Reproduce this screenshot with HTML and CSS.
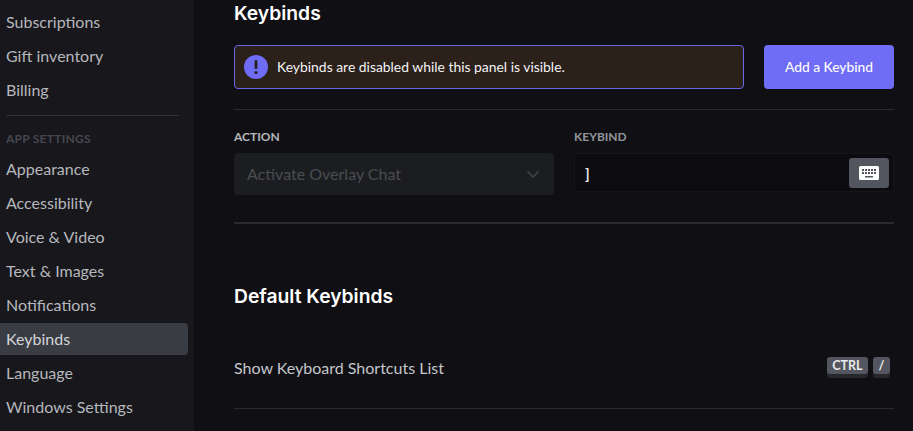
FILE: index.html
```html
<!DOCTYPE html>
<html lang="en">
<head>
  <meta charset="UTF-8">
  <title>Keybinds</title>
  <link rel="stylesheet" href="styles.css">
</head>
<body>
  <div class="app">
    <nav class="sidebar">
      <a class="nav-item">Subscriptions</a>
      <a class="nav-item">Gift inventory</a>
      <a class="nav-item">Billing</a>
      <div class="nav-divider"></div>
      <div class="nav-header">APP SETTINGS</div>
      <a class="nav-item">Appearance</a>
      <a class="nav-item">Accessibility</a>
      <a class="nav-item">Voice &amp; Video</a>
      <a class="nav-item">Text &amp; Images</a>
      <a class="nav-item">Notifications</a>
      <a class="nav-item active">Keybinds</a>
      <a class="nav-item">Language</a>
      <a class="nav-item">Windows Settings</a>
    </nav>

    <main class="content">
      <h2 class="page-title">Keybinds</h2>

      <div class="notice-row">
        <div class="notice">
          <svg class="notice-icon" width="24" height="24" viewBox="0 0 24 24">
            <circle cx="12" cy="12" r="12" fill="#6f6cf5"/>
            <rect x="10.6" y="5" width="2.8" height="9" rx="1.2" fill="#2b211a"/>
            <circle cx="12" cy="17.6" r="1.7" fill="#2b211a"/>
          </svg>
          <span class="notice-text">Keybinds are disabled while this panel is visible.</span>
        </div>
        <button class="add-button">Add a Keybind</button>
      </div>

      <div class="divider"></div>

      <div class="bind-grid">
        <div class="field">
          <div class="field-label action-label">ACTION</div>
          <div class="select">
            <span class="select-value">Activate Overlay Chat</span>
            <svg width="16" height="16" viewBox="0 0 16 16" fill="none">
              <path d="M2.500 5.500L8 11l5.500-5.500" stroke="#3c3e43" stroke-width="1.800"/>
            </svg>
          </div>
        </div>
        <div class="field">
          <div class="field-label">KEYBIND</div>
          <div class="key-input">
            <span class="key-value">]</span>
            <div class="key-button">
              <svg width="20" height="14" viewBox="0 0 20 14">
                <path fill="#fff" fill-rule="evenodd" d="M1.500 0h17A1.500 1.500 0 0 1 20 1.500v11a1.500 1.500 0 0 1-1.500 1.500h-17A1.500 1.500 0 0 1 0 12.500v-11A1.500 1.500 0 0 1 1.500 0zM3 3v2h2V3zm3 0v2h2V3zm3 0v2h2V3zm3 0v2h2V3zm3 0v2h2V3zM3 6v2h2V6zm3 0v2h2V6zm3 0v2h2V6zm3 0v2h2V6zm3 0v2h2V6zM6 10v1.500h8V10z"/>
              </svg>
            </div>
          </div>
        </div>
      </div>

      <div class="divider thick"></div>

      <h2 class="section-title">Default Keybinds</h2>

      <div class="shortcut-row">
        <span>Show Keyboard Shortcuts List</span>
        <div class="keys">
          <span class="key">CTRL</span>
          <span class="key">/</span>
        </div>
      </div>

      <div class="divider"></div>
    </main>
  </div>
</body>
</html>
```

FILE: styles.css
```css
html, body {
  margin: 0;
  height: 100%;
  overflow: hidden;
}

body {
  background: #101014;
  color: #fff;
  font-family: "Lato", "Liberation Sans", sans-serif;
}

.app {
  display: flex;
  height: 431px;
}

.sidebar {
  width: 188px;
  padding: 6px 0 0 0;
  margin-right: 6px;
  box-sizing: border-box;
  box-shadow: 6px 0 0 #17171c;
  background: #17171c;
  display: flex;
  flex-direction: column;
  gap: 2px;
}

.nav-item {
  height: 32px;
  box-sizing: border-box;
  flex: none;
  display: flex;
  align-items: center;
  padding: 0 0 2px 6px;
  font-size: 16px;
  color: #b6b8bd;
  border-radius: 0 4px 4px 0;
}

.nav-item.active {
  background: #3a3c43;
  color: #d3d5d9;
}

.nav-divider {
  height: 1px;
  flex: none;
  background: #303036;
  margin: 7px 9px 4px 6px;
}

.nav-header {
  height: 30px;
  box-sizing: border-box;
  flex: none;
  display: flex;
  align-items: center;
  padding: 2px 0 0 6px;
  font-size: 12px;
  font-weight: 700;
  letter-spacing: 0.25px;
  color: #46474e;
  margin-bottom: -1px;
}

.content {
  width: 660px;
  margin-left: 40px;
  flex: none;
}

.page-title, .section-title {
  margin: 0;
  font-family: "Inter", sans-serif;
  font-size: 19.3px;
  font-weight: 600;
  line-height: 26px;
}

.notice-row {
  display: flex;
  gap: 20px;
  margin-top: 19px;
  height: 44px;
}

.notice {
  flex: 1;
  display: flex;
  align-items: center;
  gap: 9px;
  padding-left: 9px;
  background: #2b211a;
  border: 1px solid #6a67e8;
  border-radius: 4px;
  font-size: 13.9px;
  color: #f3f3f5;
}

.notice-text {
  padding-bottom: 2px;
}

.add-button {
  width: 130px;
  padding: 0 0 2px;
  border: none;
  border-radius: 4px;
  background: #6f6cf5;
  color: #fff;
  font-family: inherit;
  font-size: 13.8px;
  font-weight: 500;
}

.divider {
  height: 1px;
  background: #2a2a30;
  margin-top: 20px;
}

.divider.thick {
  height: 2px;
  background: #2a2a30;
  margin-top: 27px;
}

.bind-grid {
  display: grid;
  grid-template-columns: 1fr 1fr;
  gap: 20px;
  margin-top: 19px;
}

.field-label {
  font-size: 12px;
  font-weight: 700;
  line-height: 15px;
  color: #93959a;
  margin-bottom: 9px;
}

.action-label {
  color: #b6b8bd;
}

.select {
  height: 42px;
  box-sizing: border-box;
  display: flex;
  align-items: center;
  justify-content: space-between;
  padding: 0 13px;
  background: #1c1d21;
  border-radius: 4px;
  font-size: 16px;
  color: #4a4c51;
}

.select-value {
  padding-bottom: 2px;
}

.key-input {
  height: 39px;
  box-sizing: border-box;
  display: flex;
  align-items: center;
  justify-content: space-between;
  padding: 0 4px 0 10px;
  background: #0c0c10;
  border: 1px solid #15151a;
  border-radius: 4px;
}

.key-value {
  font-size: 15px;
  font-weight: 700;
  color: #e6e6e8;
}

.key-button {
  width: 40px;
  height: 30px;
  display: flex;
  align-items: center;
  justify-content: center;
  background: #53565e;
  border-radius: 3px;
}

.section-title {
  margin-top: 59px;
}

.shortcut-row {
  display: flex;
  align-items: center;
  justify-content: space-between;
  height: 32px;
  margin-top: 42px;
  font-size: 16px;
  color: #c4c6cb;
}

.shortcut-row + .divider {
  margin-top: 25px;
}

.keys {
  display: flex;
  gap: 5px;
  margin-right: 4px;
  margin-bottom: 4px;
}

.key {
  min-width: 17px;
  height: 17px;
  box-sizing: border-box;
  padding: 0 5.5px;
  display: flex;
  align-items: center;
  justify-content: center;
  background: #53565e;
  border-radius: 3px;
  box-shadow: 0 4px 0 #26272b;
  font-size: 12.5px;
  font-weight: 700;
  color: #e8e9eb;
}
```
